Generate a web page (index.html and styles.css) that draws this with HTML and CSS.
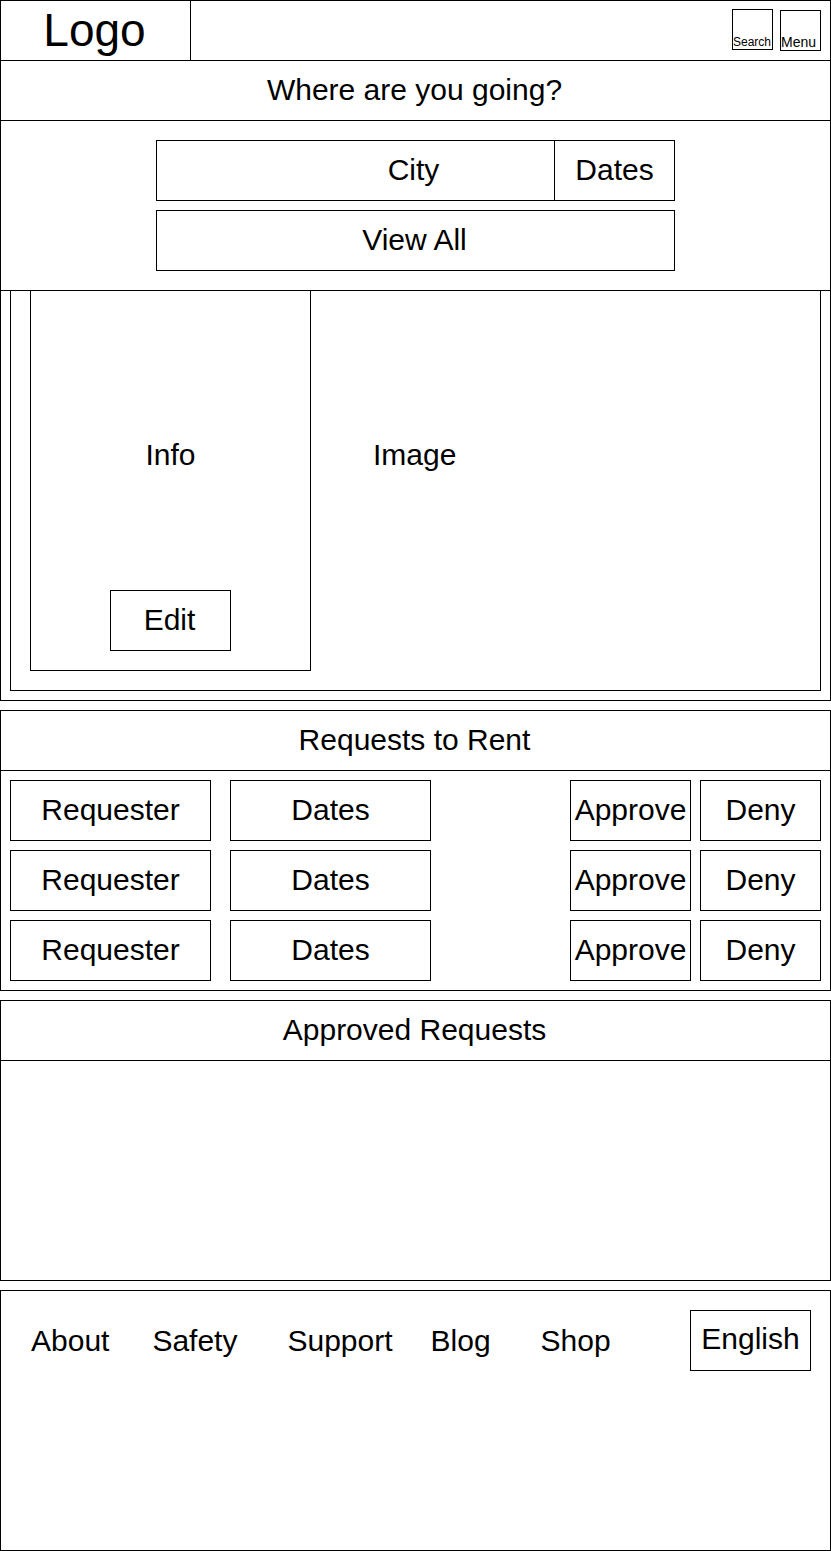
FILE: index.html
```html
<!DOCTYPE html>
<html lang="en">
<head>
<meta charset="utf-8">
<title>Host Dashboard</title>
<link rel="stylesheet" href="styles.css">
</head>
<body>
<div class="page">
  <header class="header">
    <div class="logo">Logo</div>
    <div class="actions">
      <div class="icon-btn search-btn">Search</div>
      <div class="icon-btn menu-btn">Menu</div>
    </div>
  </header>

  <div class="where">Where are you going?</div>

  <section class="search">
    <div class="search-row">
      <div class="city">City</div>
      <div class="dates">Dates</div>
    </div>
    <div class="view-all">View All</div>
  </section>

  <section class="listing">
    <div class="listing-inner">
      <div class="info">
        <div class="info-label">Info</div>
        <div class="edit">Edit</div>
      </div>
      <div class="image-label">Image</div>
    </div>
  </section>

  <section class="panel requests">
    <div class="panel-title">Requests to Rent</div>
    <div class="rows">
      <div class="row">
        <div class="cell wide">Requester</div>
        <div class="cell wide dates-cell">Dates</div>
        <div class="cell narrow approve">Approve</div>
        <div class="cell narrow deny">Deny</div>
      </div>
      <div class="row">
        <div class="cell wide">Requester</div>
        <div class="cell wide dates-cell">Dates</div>
        <div class="cell narrow approve">Approve</div>
        <div class="cell narrow deny">Deny</div>
      </div>
      <div class="row">
        <div class="cell wide">Requester</div>
        <div class="cell wide dates-cell">Dates</div>
        <div class="cell narrow approve">Approve</div>
        <div class="cell narrow deny">Deny</div>
      </div>
    </div>
  </section>

  <section class="panel approved">
    <div class="panel-title">Approved Requests</div>
    <div class="approved-body"></div>
  </section>

  <footer class="footer">
    <div class="footer-row">
      <a class="flink f-about">About</a>
      <a class="flink f-safety">Safety</a>
      <a class="flink f-support">Support</a>
      <a class="flink f-blog">Blog</a>
      <a class="flink f-shop">Shop</a>
      <div class="lang">English</div>
    </div>
  </footer>
</div>
</body>
</html>
```

FILE: styles.css
```css
* {
  box-sizing: border-box;
}

html, body {
  margin: 0;
  padding: 0;
  background: #fff;
}

body {
  font-family: "Liberation Sans", Arial, Helvetica, sans-serif;
  color: #000;
  font-size: 30px;
}

.page {
  width: 831px;
}

/* Header */
.header {
  display: flex;
  height: 61px;
  border: 1px solid #000;
}

.logo {
  width: 190px;
  border-right: 1px solid #000;
  display: flex;
  align-items: center;
  justify-content: center;
  font-size: 46px;
  padding-bottom: 2px;
  padding-right: 2px;
}

.actions {
  flex: 1;
  display: flex;
  justify-content: flex-end;
  align-items: flex-start;
  padding-right: 9px;
  gap: 7px;
}

.icon-btn {
  width: 41px;
  height: 41px;
  border: 1px solid #000;
  display: flex;
  align-items: flex-end;
  justify-content: flex-start;
  line-height: normal;
}

.search-btn {
  margin-top: 8px;
  font-size: 12px;
}

.menu-btn {
  margin-top: 9px;
  font-size: 14px;
}

/* Where */
.where {
  height: 60px;
  border-left: 1px solid #000;
  border-right: 1px solid #000;
  border-bottom: 1px solid #000;
  display: flex;
  align-items: center;
  justify-content: center;
  padding-bottom: 2px;
  padding-right: 2px;
}

/* Search */
.search {
  height: 170px;
  border-left: 1px solid #000;
  border-right: 1px solid #000;
  border-bottom: 1px solid #000;
  padding-top: 19px;
  display: flex;
  flex-direction: column;
  align-items: center;
  gap: 9px;
}

.search-row {
  width: 519px;
  height: 61px;
  border: 1px solid #000;
  display: flex;
}

.city {
  flex: 1;
  display: flex;
  align-items: center;
  justify-content: center;
  padding-left: 116px;
  padding-bottom: 2px;
}

.dates {
  width: 120px;
  border-left: 1px solid #000;
  display: flex;
  align-items: center;
  justify-content: center;
  padding-bottom: 2px;
}

.view-all {
  width: 519px;
  height: 61px;
  border: 1px solid #000;
  display: flex;
  align-items: center;
  justify-content: center;
  padding-bottom: 2px;
  padding-right: 2px;
}

/* Listing */
.listing {
  height: 410px;
  border-left: 1px solid #000;
  border-right: 1px solid #000;
  border-bottom: 1px solid #000;
  padding: 0 9px 9px 9px;
}

.listing-inner {
  height: 400px;
  border-left: 1px solid #000;
  border-right: 1px solid #000;
  border-bottom: 1px solid #000;
  display: flex;
  padding: 0 0 19px 19px;
}

.info {
  width: 281px;
  height: 380px;
  border-left: 1px solid #000;
  border-right: 1px solid #000;
  border-bottom: 1px solid #000;
  display: flex;
  flex-direction: column;
  align-items: center;
  padding-top: 147px;
  padding-bottom: 19px;
}

.info-label {
  line-height: 34px;
}

.edit {
  margin-top: auto;
  width: 121px;
  height: 61px;
  border: 1px solid #000;
  display: flex;
  align-items: center;
  justify-content: center;
  padding-bottom: 2px;
  padding-right: 2px;
}

.image-label {
  padding-left: 62px;
  padding-top: 147px;
  line-height: 34px;
}

/* Panels */
.panel {
  margin-top: 9px;
  border: 1px solid #000;
}

.panel-title {
  height: 60px;
  border-bottom: 1px solid #000;
  display: flex;
  align-items: center;
  justify-content: center;
  padding-bottom: 2px;
  padding-right: 2px;
}

.rows {
  padding: 9px;
  display: flex;
  flex-direction: column;
  gap: 9px;
}

.row {
  display: flex;
  height: 61px;
}

.cell {
  height: 61px;
  border: 1px solid #000;
  display: flex;
  align-items: center;
  justify-content: center;
  white-space: nowrap;
  padding-bottom: 2px;
}

.wide {
  width: 201px;
}

.dates-cell {
  margin-left: 19px;
}

.narrow {
  width: 121px;
}

.approve {
  margin-left: auto;
}

.deny {
  margin-left: 9px;
}

.approved-body {
  height: 219px;
}

/* Footer */
.footer {
  margin-top: 9px;
  height: 261px;
  border: 1px solid #000;
  padding: 19px 19px 0 0;
}

.footer-row {
  display: flex;
  align-items: center;
  height: 61px;
}

.flink {
  color: #000;
  text-decoration: none;
  white-space: nowrap;
}

.f-about { margin-left: 30px; }
.f-safety { margin-left: 43px; }
.f-support { margin-left: 50px; }
.f-blog { margin-left: 38px; }
.f-shop { margin-left: 50px; }

.lang {
  margin-left: auto;
  width: 121px;
  height: 61px;
  border: 1px solid #000;
  display: flex;
  align-items: center;
  justify-content: center;
  padding-bottom: 3px;
}
```
